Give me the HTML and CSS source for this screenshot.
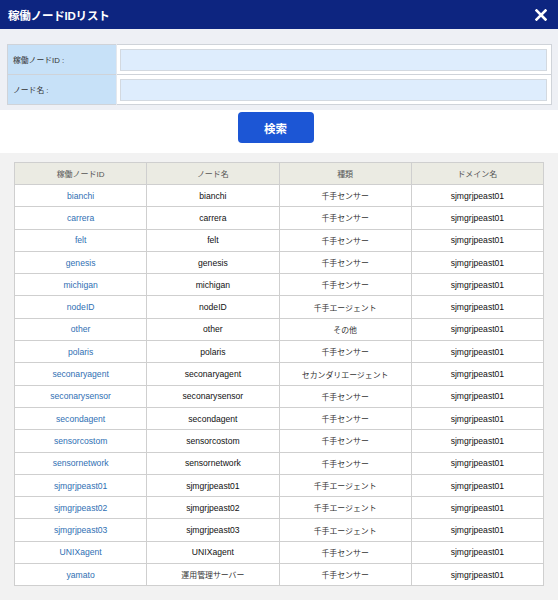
FILE: index.html
```html
<!DOCTYPE html>
<html lang="ja">
<head>
<meta charset="utf-8">
<title>稼働ノードIDリスト</title>
<link rel="stylesheet" href="styles.css">
</head>
<body>
<div class="dialog">
  <div class="titlebar">
    <span class="title">稼働ノードIDリスト</span>
    <svg class="close" width="12" height="12" viewBox="0 0 12 12"><path d="M1.5 1.5 L10.5 10.5 M10.5 1.5 L1.5 10.5" stroke="#fff" stroke-width="2.6" stroke-linecap="square"/></svg>
  </div>
  <div class="search-area">
    <table class="form">
      <tr><th>稼働ノードID :</th><td><div class="input"></div></td></tr>
      <tr><th>ノード名 :</th><td><div class="input"></div></td></tr>
    </table>
  </div>
  <div class="btn-area">
    <button class="btn">検索</button>
  </div>
  <div class="list-area">
    <table class="list">
      <thead>
        <tr><th>稼働ノードID</th><th>ノード名</th><th>種類</th><th>ドメイン名</th></tr>
      </thead>
      <tbody>
        <tr><td><a>bianchi</a></td><td>bianchi</td><td class="jp">千手センサー</td><td>sjmgrjpeast01</td></tr>
        <tr><td><a>carrera</a></td><td>carrera</td><td class="jp">千手センサー</td><td>sjmgrjpeast01</td></tr>
        <tr><td><a>felt</a></td><td>felt</td><td class="jp">千手センサー</td><td>sjmgrjpeast01</td></tr>
        <tr><td><a>genesis</a></td><td>genesis</td><td class="jp">千手センサー</td><td>sjmgrjpeast01</td></tr>
        <tr><td><a>michigan</a></td><td>michigan</td><td class="jp">千手センサー</td><td>sjmgrjpeast01</td></tr>
        <tr><td><a>nodeID</a></td><td>nodeID</td><td class="jp">千手エージェント</td><td>sjmgrjpeast01</td></tr>
        <tr><td><a>other</a></td><td>other</td><td class="jp">その他</td><td>sjmgrjpeast01</td></tr>
        <tr><td><a>polaris</a></td><td>polaris</td><td class="jp">千手センサー</td><td>sjmgrjpeast01</td></tr>
        <tr><td><a>seconaryagent</a></td><td>seconaryagent</td><td class="jp">セカンダリエージェント</td><td>sjmgrjpeast01</td></tr>
        <tr><td><a>seconarysensor</a></td><td>seconarysensor</td><td class="jp">千手センサー</td><td>sjmgrjpeast01</td></tr>
        <tr><td><a>secondagent</a></td><td>secondagent</td><td class="jp">千手センサー</td><td>sjmgrjpeast01</td></tr>
        <tr><td><a>sensorcostom</a></td><td>sensorcostom</td><td class="jp">千手センサー</td><td>sjmgrjpeast01</td></tr>
        <tr><td><a>sensornetwork</a></td><td>sensornetwork</td><td class="jp">千手センサー</td><td>sjmgrjpeast01</td></tr>
        <tr><td><a>sjmgrjpeast01</a></td><td>sjmgrjpeast01</td><td class="jp">千手エージェント</td><td>sjmgrjpeast01</td></tr>
        <tr><td><a>sjmgrjpeast02</a></td><td>sjmgrjpeast02</td><td class="jp">千手エージェント</td><td>sjmgrjpeast01</td></tr>
        <tr><td><a>sjmgrjpeast03</a></td><td>sjmgrjpeast03</td><td class="jp">千手エージェント</td><td>sjmgrjpeast01</td></tr>
        <tr><td><a>UNIXagent</a></td><td>UNIXagent</td><td class="jp">千手センサー</td><td>sjmgrjpeast01</td></tr>
        <tr><td><a>yamato</a></td><td class="jp">運用管理サーバー</td><td class="jp">千手センサー</td><td>sjmgrjpeast01</td></tr>
      </tbody>
    </table>
  </div>
</div>
</body>
</html>
```

FILE: styles.css
```css
html, body {
  margin: 0;
  padding: 0;
  background: #f2f2f2;
}
body {
  font-family: "Liberation Sans", "Noto Sans CJK JP", sans-serif;
  color: #222;
}
.dialog {
  width: 558px;
  height: 600px;
  display: flex;
  flex-direction: column;
}
.titlebar {
  height: 29px;
  flex: none;
  background: #0d2580;
  display: flex;
  align-items: center;
  justify-content: space-between;
  padding: 0 11px 0 8px;
  box-sizing: border-box;
}
.title {
  color: #fff;
  font-weight: bold;
  font-size: 11.5px;
  letter-spacing: -0.2px;
}
.close {
  display: block;
}
.search-area {
  background: #eef0f5;
  padding: 15px 6px 5px 7px;
  flex: none;
}
.form {
  width: 100%;
  border-collapse: collapse;
  border: 1px solid #cfd3d9;
  background: #fff;
}
.form tr {
  height: 30px;
}
.form tr + tr {
  border-top: 1px solid #cfd3d9;
}
.form th {
  width: 103px;
  background: #c7e1f8;
  text-align: left;
  font-weight: normal;
  font-size: 7.8px;
  color: #333;
  padding: 0 0 0 5px;
  border-right: 1px solid #e4e8ee;
}
.form td {
  padding: 3px 4px 3px 3px;
}
.input {
  height: 20px;
  background: #deedfd;
  border: 1px solid #d3d9e0;
}
.btn-area {
  background: #fff;
  height: 43px;
  flex: none;
  display: flex;
  justify-content: center;
  align-items: flex-start;
  padding: 2px 7px 0 0;
  box-sizing: border-box;
}
.btn {
  width: 76px;
  height: 31px;
  background: #1c56d5;
  border: none;
  border-radius: 4px;
  color: #fff;
  font-family: "Liberation Sans", "Noto Sans CJK JP", sans-serif;
  font-weight: bold;
  font-size: 11.5px;
  padding: 0;
}
.list-area {
  flex: 1;
  background: #f2f2f2;
  padding: 9px 14px 0 14px;
}
.list {
  width: 530px;
  border-collapse: collapse;
  table-layout: fixed;
  background: #fff;
  font-size: 8.6px;
}
.list th, .list td {
  border: 1px solid #cfcfcf;
  text-align: center;
  padding: 0;
}
.list th {
  background: #ebebe3;
  font-weight: normal;
  font-size: 8px;
  color: #555;
  height: 21px;
}
.list td {
  height: 21.3px;
  color: #111;
}
.list td.jp {
  font-size: 7.9px;
  color: #333;
}
.list a {
  color: #2f6fb3;
}
```
